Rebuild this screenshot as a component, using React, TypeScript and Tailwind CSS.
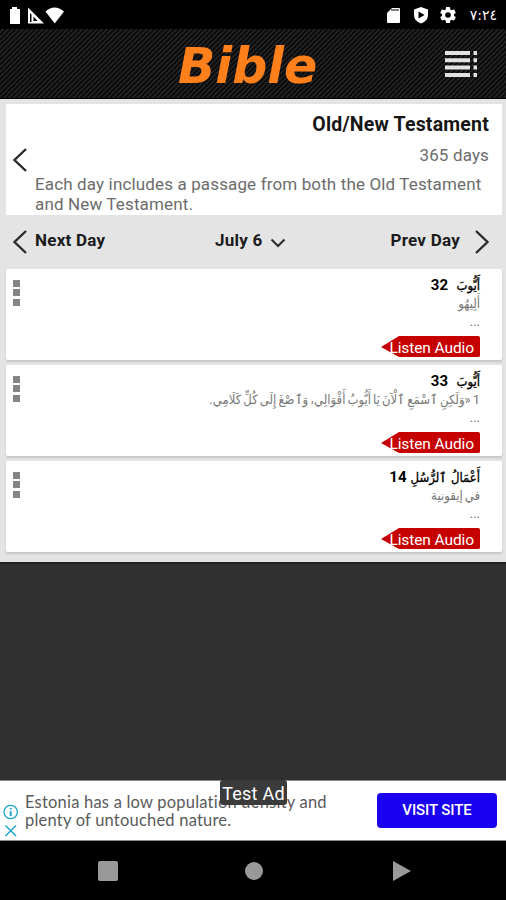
interface Reading {
  book: string
  chapter: number
  preview: string
}

const readings: Reading[] = [
  { book: 'أَيُّوبَ', chapter: 32, preview: 'أَلِيهُو' },
  { book: 'أَيُّوبَ', chapter: 33, preview: '1 «وَلَكِنِ ٱسْمَعِ ٱلْآنَ يَا أَيُّوبُ أَقْوَالِي، وَٱصْغَ إِلَى كُلِّ كَلَامِي.' },
  { book: 'أَعْمَالُ ٱلرُّسُلِ', chapter: 14, preview: 'في إيقونية' },
]

function StatusBar() {
  return (
    <div className="flex h-[29px] items-center justify-between bg-black pt-px pr-[9px] pl-[9px] text-white">
      <div className="flex items-center">
        <svg width="12" height="18" viewBox="0 0 12 18" fill="currentColor">
          <path d="M3 1h5v2h3v15H1V3h2z" />
        </svg>
        <svg className="ml-[7px]" width="17" height="18" viewBox="0 0 17 18" fill="currentColor" fillRule="evenodd">
          <path d="M0 1.5 16 17.500H0zM2 7v9h1.500V8.500zM5.500 10.500V15h4z" />
        </svg>
        <svg width="20" height="18" viewBox="0 0 20 18" fill="currentColor">
          <path d="M.5 5.500Q9.500-2.500 19 5.500L9.700 17.500z" />
        </svg>
      </div>
      <div className="flex items-center">
        <svg width="14" height="18" viewBox="0 0 14 18">
          <path d="M5 2h7q1 0 1 1v13q0 1-1 1H1q-1 0-1-1V7z" fill="currentColor" />
          <path d="M4 4h8" stroke="#555" strokeWidth="1.500" />
        </svg>
        <svg className="ml-[12px]" width="16" height="18" viewBox="0 0 16 18">
          <path d="M8 1l7 2.600V9q0 6-7 8.500Q1 15 1 9V3.600z" fill="currentColor" />
          <path d="M5.500 5.500 11.500 9l-6 3.500z" fill="#000" />
        </svg>
        <svg className="ml-[11px]" width="16" height="16" viewBox="2 2 20 20" fill="currentColor">
          <path d="M19.430 12.980c.04-.32.07-.64.07-.98s-.03-.66-.07-.98l2.110-1.650c.19-.15.24-.42.12-.64l-2-3.460c-.12-.22-.39-.3-.61-.22l-2.490 1c-.52-.4-1.080-.73-1.690-.98l-.38-2.650A.49.49 0 0 0 14 2h-4c-.25 0-.46.18-.49.42l-.38 2.650c-.61.25-1.170.59-1.690.98l-2.490-1c-.23-.09-.49 0-.61.22l-2 3.460c-.13.22-.07.49.12.64l2.110 1.650c-.04.32-.07.65-.07.98s.03.66.07.98l-2.110 1.650c-.19.15-.24.42-.12.64l2 3.460c.12.22.39.3.61.22l2.490-1c.52.4 1.080.73 1.690.98l.38 2.650c.03.24.24.42.49.42h4c.25 0 .46-.18.49-.42l.38-2.650c.61-.25 1.170-.59 1.690-.98l2.490 1c.23.09.49 0 .61-.22l2-3.460c.12-.22.07-.49-.12-.64zM12 15.500a3.500 3.500 0 1 1 0-7 3.500 3.500 0 0 1 0 7z" />
        </svg>
        <span className="ml-[13px] w-[28px] text-right font-['DejaVu_Sans',sans-serif] text-[14px] leading-[18px] whitespace-nowrap" dir="ltr">٧:٢٤</span>
      </div>
    </div>
  )
}

function Header() {
  return (
    <header className="flex h-[70px] items-center border-b border-black bg-[repeating-linear-gradient(135deg,#0b0b0b_0px,#0b0b0b_1.2px,#252525_2.1px,#252525_2.8px,#0b0b0b_3.5px)] pr-[27px] pl-[178px]">
      <h1 className="w-[150px] pt-[7px] font-['DejaVu_Sans',sans-serif] text-[49px] leading-[70px] font-bold text-[#ff7f1b] italic">Bible</h1>
      <svg className="ml-auto" width="34" height="28" viewBox="0 0 34 28" fill="#e2e2e2">
        <path d="M0 1h25v4H0zM28.500 1H32v4h-3.500zM0 8.300h25v4H0zM28.500 8.300H32v4h-3.500zM0 15.600h25v4H0zM28.500 15.600H32v4h-3.500zM0 22.900h25v4H0zM28.500 22.900H32v4h-3.500z" />
      </svg>
    </header>
  )
}

function ChevronLeft() {
  return (
    <svg className="shrink-0" width="16" height="26" viewBox="0 0 16 26" fill="none" stroke="#2b2b2b" strokeWidth="2.400">
      <path d="M14 2 2.500 13 14 24" />
    </svg>
  )
}

function PlanCard() {
  return (
    <section className="mx-[6px] mr-[4px] flex h-[111px] bg-white pl-[6px]">
      <div className="flex pt-[43px]">
        <ChevronLeft />
      </div>
      <div className="flex-1 pt-[9px] pr-[13px] pl-[7px]">
        <h2 className="text-right text-[19.500px] leading-[24px] font-bold tracking-[0.190px] text-[#161616]">Old/New Testament</h2>
        <p className="pt-[6px] text-right text-[17px] leading-[24px] tracking-[0.140px] text-[#6c6c6c]">365 days</p>
        <p className="pt-[7px] text-[17px] leading-[20px] tracking-[0.140px] whitespace-nowrap text-[#6c6c6c]">
          Each day includes a passage from both the Old Testament
          <br />
          and New Testament.
        </p>
      </div>
    </section>
  )
}

function DayNav() {
  return (
    <nav className="flex h-[54px] items-center pr-[16px] pl-[12px] text-[17px] font-bold tracking-[0.250px] text-[#1b1b1b]">
      <ChevronLeft />
      <span className="w-[187px] pb-[2px] pl-[7px]">Next Day</span>
      <span className="pb-[2px]">July 6</span>
      <svg className="mt-[2px] ml-[7px]" width="16" height="12" viewBox="0 0 16 12" fill="none" stroke="#2b2b2b" strokeWidth="2">
        <path d="M1.500 2.500 8 9 14.500 2.500" />
      </svg>
      <span className="ml-auto pb-[2px]">Prev Day</span>
      <svg className="ml-[14px]" width="16" height="26" viewBox="0 0 16 26" fill="none" stroke="#2b2b2b" strokeWidth="2.400">
        <path d="M2 2 13.500 13 2 24" />
      </svg>
    </nav>
  )
}

function ListenButton() {
  return (
    <button className="relative mt-[6px] flex h-[22px] w-[99px] items-center text-[15.500px] leading-[22px] text-white">
      <svg className="absolute inset-0" width="99" height="22" viewBox="0 0 99 22" fill="#c60000">
        <path d="M0 11 9 5.500 18 0h79q2 0 2 2v17.500q0 1.500-2 1.500H18L9 16z" />
      </svg>
      <span className="relative w-full pt-[2px] pr-[6px] text-right tracking-[-0.100px] whitespace-nowrap">Listen Audio</span>
    </button>
  )
}

function ReadingCard({ book, chapter, preview }: Reading) {
  return (
    <article className="flex h-[91px] justify-between rounded-[2px] bg-white pr-[22px] pl-[7px] shadow-[0_2px_2px_#c6c6c6]">
      <div className="flex flex-col gap-[2.500px] pt-[10.500px]">
        <span className="size-[7px] bg-[#858585]" />
        <span className="size-[7px] bg-[#858585]" />
        <span className="size-[7px] bg-[#858585]" />
      </div>
      <div className="flex flex-col items-end pt-[6px]">
        <h3 className="flex h-[20px] items-baseline gap-[4px] text-[15px] leading-[20px] font-bold whitespace-nowrap text-black" dir="rtl">
          <span className="min-w-[28px] font-['DejaVu_Sans_Condensed','DejaVu_Sans',sans-serif] text-[13px] font-medium [-webkit-text-stroke:0.3px_#000]">{book}</span>
          <span>{chapter}</span>
        </h3>
        <p className="h-[18px] font-[Roboto,'DejaVu_Sans_Condensed','DejaVu_Sans',sans-serif] text-[13px] leading-[18px] [word-spacing:-1.200px] whitespace-nowrap text-[#777]" dir="rtl">{preview}</p>
        <p className="h-[17px] text-[13px] leading-[17px] text-[#777]">...</p>
        <ListenButton />
      </div>
    </article>
  )
}

function AdBanner() {
  return (
    <aside className="relative flex h-[61px] items-center border-t border-b border-[#8a8a8a] bg-white pr-[9px] pl-[3px]">
      <div className="flex w-[22px] flex-col gap-[4px] pt-[21px]">
        <svg width="16" height="16" viewBox="0 0 16 16" fill="none" stroke="#20a7c9" strokeWidth="1.300">
          <circle cx="7.700" cy="8" r="6.700" />
          <path d="M7.700 7v5M7.700 4v1.500" strokeWidth="2" />
        </svg>
        <svg width="16" height="14" viewBox="0 0 16 14" fill="none" stroke="#20a7c9" strokeWidth="1.500">
          <path d="M2.500 1.500 13 12M13 1.500 2.500 12" />
        </svg>
      </div>
      <p className="pt-[2px] font-[Lato,sans-serif] text-[16.500px] leading-[17.500px] tracking-[0.210px] whitespace-nowrap text-[#5a5a5a]">
        Estonia has a low population density and
        <br />
        plenty of untouched nature.
      </p>
      <button className="ml-auto h-[35px] w-[120px] rounded-[4px] bg-[#1a00f0] text-[15px] font-medium tracking-[-0.100px] text-white">VISIT SITE</button>
      <span className="absolute -top-[1px] left-[220px] h-[25px] w-[67px] rounded-[3px] bg-[#3b3b3b] text-center text-[18px] leading-[27px] tracking-[0.250px] text-white">Test Ad</span>
    </aside>
  )
}

function SystemNav() {
  return (
    <div className="flex h-[59px] items-center bg-black pl-[98px] text-[#999]">
      <span className="size-[20px] rounded-[2px] bg-[#999]" />
      <span className="ml-[127px] size-[18px] rounded-full bg-[#999]" />
      <svg className="ml-[129px]" width="20" height="22" viewBox="0 0 20 22" fill="#999">
        <path d="M1 1 19 11 1 21z" />
      </svg>
    </div>
  )
}

export default function App() {
  return (
    <div className="flex h-[900px] w-[506px] flex-col overflow-hidden bg-[#303030] font-[Roboto,'DejaVu_Sans',sans-serif]">
      <StatusBar />
      <Header />
      <main className="h-[465px] border-b-2 border-[#202020] bg-[#e4e4e4] pt-[5px]">
        <PlanCard />
        <DayNav />
        <div className="flex flex-col gap-[5px] pr-[4px] pl-[6px]">
          {readings.map((reading) => (
            <ReadingCard key={reading.chapter} {...reading} />
          ))}
        </div>
      </main>
      <div className="flex-1" />
      <AdBanner />
      <SystemNav />
    </div>
  )
}
